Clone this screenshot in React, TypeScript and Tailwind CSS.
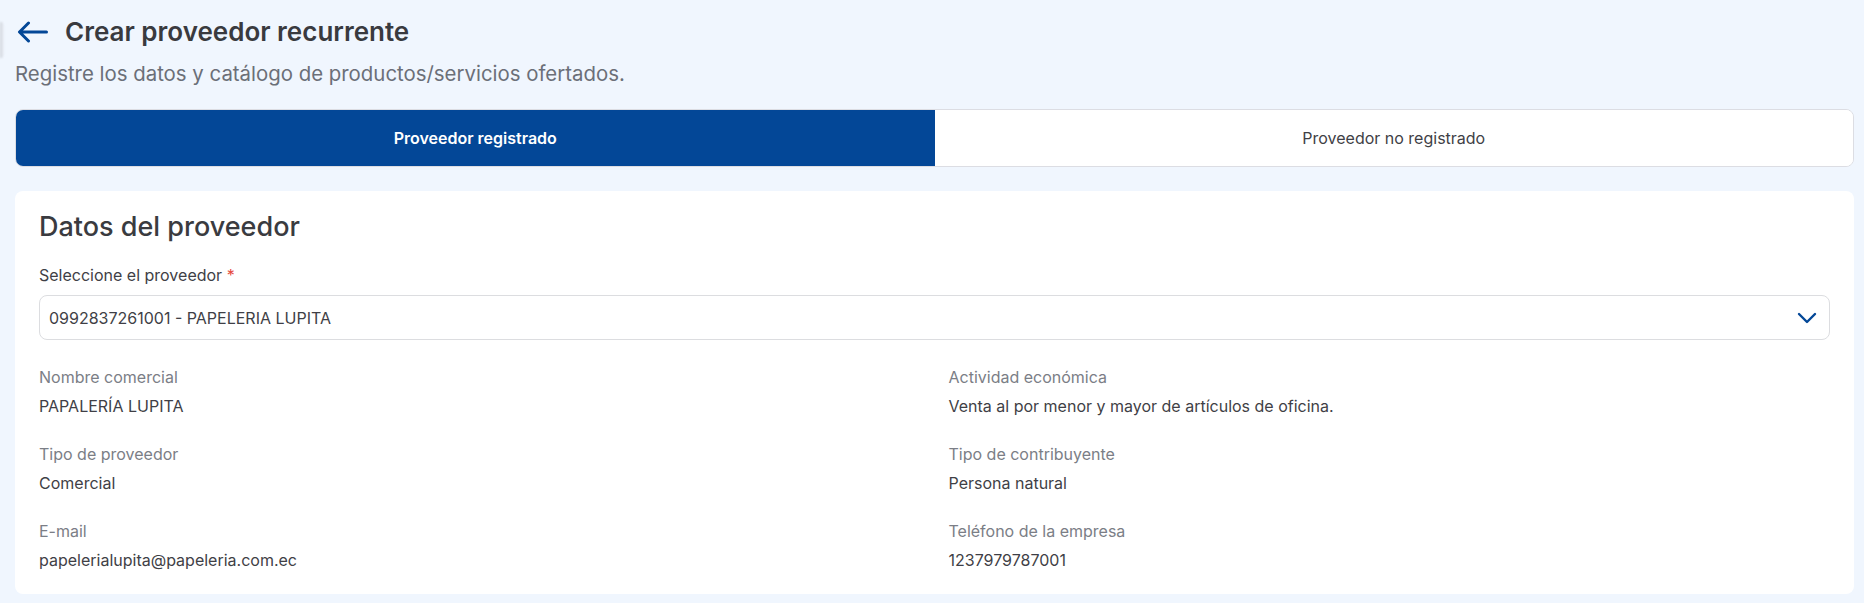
import { useState } from "react";

const details = [
  { label: "Nombre comercial", value: "PAPALERÍA LUPITA" },
  { label: "Actividad económica", value: "Venta al por menor y mayor de artículos de oficina." },
  { label: "Tipo de proveedor", value: "Comercial" },
  { label: "Tipo de contribuyente", value: "Persona natural" },
  { label: "E-mail", value: "papelerialupita@papeleria.com.ec" },
  { label: "Teléfono de la empresa", value: "1237979787001" },
];

function App() {
  const [tab, setTab] = useState<"registrado" | "no">("registrado");

  return (
    <div
      className="relative min-h-[603px] bg-[#f0f6fe] pl-[15px] pr-[10px] pt-4 pb-2 text-[#3f3f46]"
      style={{ fontFamily: "Inter, 'Noto Sans', sans-serif" }}
    >
      <div className="absolute left-0 top-[22px] h-[36px] w-[4px] rounded-r-full bg-gradient-to-r from-[#c9ccd3] to-transparent blur-[1px]" />

      <div className="flex items-center gap-[17px] h-8">
        <button className="flex items-center pl-[2px] text-[#034797]">
          <svg width="31" height="22" viewBox="0 0 31 22" fill="none">
            <path d="M29.5 11H3M11.5 2L2.5 11l9 9" stroke="currentColor" strokeWidth="3" strokeLinecap="round" strokeLinejoin="round" />
          </svg>
        </button>
        <h1 className="text-[26px] leading-8 font-semibold text-[#393a3f]">Crear proveedor recurrente</h1>
      </div>
      <p className="mt-3 text-[20.4px] leading-7 text-[#6b6f78]">
        Registre los datos y catálogo de productos/servicios ofertados.
      </p>

      <div className="mt-[21px] grid grid-cols-2 h-[58px] rounded-lg border border-[#dcdde3] bg-white overflow-hidden">
        <button
          onClick={() => setTab("registrado")}
          className={
            tab === "registrado"
              ? "bg-[#034797] text-white text-[16px] font-semibold"
              : "bg-white text-[#3f3f46] text-[16px]"
          }
        >
          Proveedor registrado
        </button>
        <button
          onClick={() => setTab("no")}
          className={
            tab === "no"
              ? "bg-[#034797] text-white text-[16px] font-semibold"
              : "bg-white text-[#3f3f46] text-[16px]"
          }
        >
          Proveedor no registrado
        </button>
      </div>

      <div className="mt-6 rounded-lg bg-white px-6 pt-5 pb-[22px]">
        <h2 className="text-[27px] leading-8 font-medium text-[#3a3b40]">Datos del proveedor</h2>

        <label className="mt-5 block text-[16px] leading-6 text-[#3f3f46]">
          Seleccione el proveedor <span className="text-[#e5483d]">*</span>
        </label>
        <div className="mt-2 flex h-[45px] items-center justify-between rounded-lg border border-[#dcdde0] pl-[9px] pr-[12px]">
          <span className="text-[16px] text-[#3f3f46]">0992837261001 - PAPELERIA LUPITA</span>
          <svg width="20" height="12" viewBox="0 0 20 12" fill="none" className="text-[#034797]">
            <path d="M2 2l8 8 8-8" stroke="currentColor" strokeWidth="2.4" strokeLinecap="round" strokeLinejoin="round" />
          </svg>
        </div>

        <div className="mt-[25px] grid grid-cols-2 gap-x-7 gap-y-6">
          {details.map((d) => (
            <div key={d.label}>
              <div className="text-[16px] leading-6 text-[#7b7e86]">{d.label}</div>
              <div className="mt-[5px] text-[16px] leading-6 text-[#3f3f46]">{d.value}</div>
            </div>
          ))}
        </div>
      </div>
    </div>
  );
}

export default App;
